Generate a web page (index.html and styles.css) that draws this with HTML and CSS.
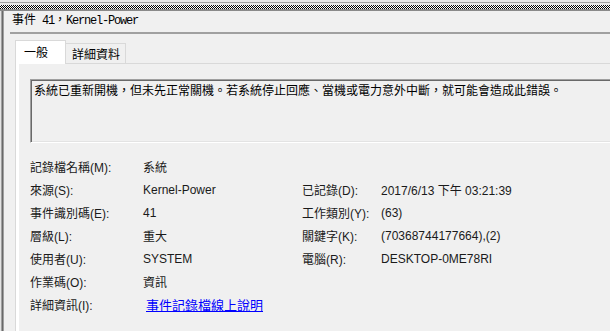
FILE: index.html
```html
<!DOCTYPE html>
<html lang="zh-Hant">
<head>
    <meta charset="UTF-8">
    <title>事件 41，Kernel-Power</title>
    <link rel="stylesheet" href="styles.css">
</head>
<body>
    <div class="topbar">
        <div class="checker"></div>
    </div>
    <div class="main">
        <div class="splitter"></div>
        <div class="pane">
            <div class="title">事件<span class="mono"> 41</span>，<span class="mono">Kernel-Power</span></div>
            <div class="rule"></div>
            <div class="tabs">
                <div class="tab active">一般</div>
                <div class="tab">詳細資料</div>
            </div>
            <div class="panel">
                <div class="panel-inner">
                    <div class="message">系統已重新開機，但未先正常關機。若系統停止回應、當機或電力意外中斷，就可能會造成此錯誤。</div>
                    <div class="props">
                        <span>記錄檔名稱(M):</span><span>系統</span><span></span><span></span>
                        <span>來源(S):</span><span>Kernel-Power</span><span>已記錄(D):</span><span>2017/6/13 下午 03:21:39</span>
                        <span>事件識別碼(E):</span><span>41</span><span>工作類別(Y):</span><span>(63)</span>
                        <span>層級(L):</span><span>重大</span><span>關鍵字(K):</span><span>(70368744177664),(2)</span>
                        <span>使用者(U):</span><span>SYSTEM</span><span>電腦(R):</span><span>DESKTOP-0ME78RI</span>
                        <span>作業碼(O):</span><span>資訊</span><span></span><span></span>
                        <span>詳細資訊(I):</span><span><a class="link" href="#">事件記錄檔線上說明</a></span><span></span><span></span>
                    </div>
                </div>
            </div>
        </div>
    </div>
</body>
</html>
```

FILE: styles.css
```css
html, body {
    margin: 0;
    width: 610px;
    height: 331px;
    overflow: hidden;
    background-color: #f0f0f0;
    font-family: "Liberation Sans", "Noto Sans CJK TC", sans-serif;
    font-size: 12px;
    color: #1a1a1a;
}
.topbar {
    height: 11px;
    box-sizing: border-box;
    background-color: #e6e6e6;
    border-top: 2px solid #e6e6e6;
    border-bottom: 2px solid #8a8a8a;
    box-shadow: inset 0 1px 0 #a0a0a0;
    padding-top: 3px;
}
.checker {
    height: 4px;
    background: repeating-conic-gradient(#000 0 25%, #fff 0 50%) 0 0 / 2px 2px;
}
.main {
    display: flex;
    height: 320px;
}
.splitter {
    width: 5px;
    flex: none;
    background: linear-gradient(to right, #e3e3e3 0 1px, #a0a0a0 1px 2px, #696969 2px 3px, #a0a0a0 3px 4px, #f0f0f0 4px);
}
.pane {
    flex: 1;
    padding-left: 5px;
    min-width: 0;
}
.title {
    height: 21px;
    line-height: 20px;
    padding-left: 2px;
    font-family: "Liberation Mono", "Noto Sans CJK TC", monospace;
    font-size: 12px;
    color: #000;
    white-space: pre;
}
.mono {
    letter-spacing: -1.2px;
}
.rule {
    height: 2px;
    background-color: #a0a0a0;
}
.tabs {
    display: flex;
    align-items: flex-end;
    margin: 6px 0 0 5px;
    position: relative;
    z-index: 1;
}
.tab {
    height: 19px;
    line-height: 19px;
    padding: 0 5px 0 6px;
    border: 1px solid #d9d9d9;
    border-bottom: none;
    border-left: none;
    background-color: #f0f0f0;
    font-family: "Noto Sans CJK TC", sans-serif;
    font-size: 12px;
    color: #000;
}
.tab.active {
    height: 23px;
    line-height: 22px;
    padding: 0 17px 0 8px;
    border-left: 1px solid #d9d9d9;
    background-color: #fff;
    margin-bottom: -1px;
}
.panel {
    margin-left: 5px;
    border-top: 1px solid #d9d9d9;
    border-left: 1px solid #d9d9d9;
    background-color: #fff;
    padding-left: 3px;
    height: 280px;
}
.panel-inner {
    background-color: #f0f0f0;
    height: 100%;
    padding: 15px 0 0 11px;
    box-sizing: border-box;
}
.message {
    height: 64px;
    box-sizing: border-box;
    padding: 2px 3px;
    border: 1px solid;
    border-right: none;
    border-color: #a0a0a0 #fff #fff #a0a0a0;
    box-shadow: inset 1px 1px 0 #696969, inset 0 -1px 0 #e3e3e3;
    font-family: "Noto Sans CJK TC", sans-serif;
    font-size: 12px;
    line-height: 15px;
    color: #000;
    white-space: nowrap;
    overflow: hidden;
}
.props {
    display: grid;
    grid-template-columns: 113px 159px 79px auto;
    grid-auto-rows: 23px;
    align-items: center;
    margin-top: 12px;
}
.props span {
    white-space: nowrap;
}
.link {
    margin-left: 3px;
    font-family: "Noto Sans CJK TC", sans-serif;
    font-size: 13px;
    color: #0000ff;
    text-decoration: underline;
}
```
